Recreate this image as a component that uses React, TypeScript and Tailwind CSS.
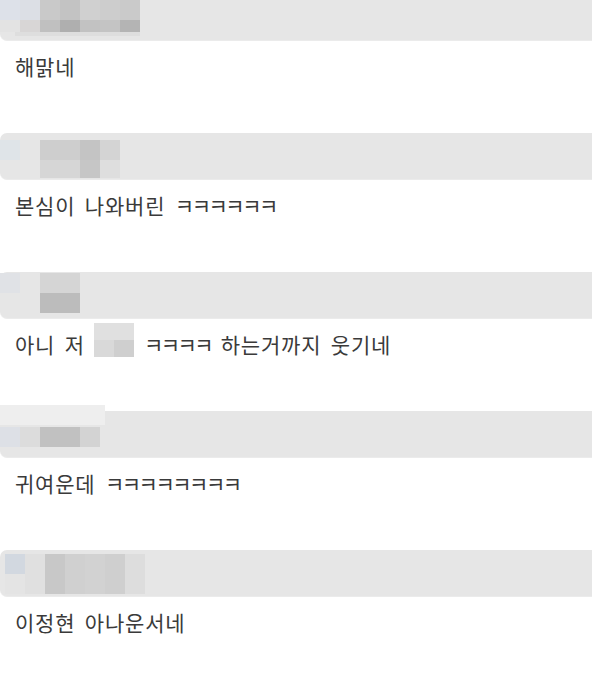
import React from "react";

type Block = { cls: string };

type Comment = {
  id: number;
  blocks: Block[];
  text: React.ReactNode;
};

const Laugh = ({ n }: { n: number }) => <span className="tracking-[-2.5px]">{"ㅋ".repeat(n)}</span>;

// blurred name tile inside the text (third comment)
const InlineBlur = () => (
  <span className="inline-block w-[40px] h-[34px] align-[-4px] -mt-[14px]">
    <span className="flex h-[17px]">
      <span className="block w-[20px] bg-[#e0e0e0]" />
      <span className="block w-[20px] bg-[#e0e0e0]" />
    </span>
    <span className="flex h-[17px]">
      <span className="block w-[20px] bg-[#d9d9d9]" />
      <span className="block w-[20px] bg-[#cfcfcf]" />
    </span>
  </span>
);

const comments: Comment[] = [
  {
    id: 1,
    blocks: [
      { cls: "left-[0px] top-[6px] w-[20px] h-[20px] bg-[#dde1e9]" },
      { cls: "left-[20px] top-[6px] w-[20px] h-[20px] bg-[#dcdfe5]" },
      { cls: "left-[40px] top-[6px] w-[20px] h-[20px] bg-[#c9c9c9]" },
      { cls: "left-[60px] top-[6px] w-[20px] h-[20px] bg-[#c3c3c3]" },
      { cls: "left-[80px] top-[6px] w-[20px] h-[20px] bg-[#d0d0d0]" },
      { cls: "left-[100px] top-[6px] w-[20px] h-[20px] bg-[#cdcdcd]" },
      { cls: "left-[120px] top-[6px] w-[20px] h-[20px] bg-[#cacaca]" },
      { cls: "left-[0px] top-[26px] w-[20px] h-[12px] bg-[#e3e3e3]" },
      { cls: "left-[20px] top-[26px] w-[20px] h-[12px] bg-[#d8d6d6]" },
      { cls: "left-[40px] top-[26px] w-[20px] h-[12px] bg-[#c0c0c0]" },
      { cls: "left-[60px] top-[26px] w-[20px] h-[12px] bg-[#afafaf]" },
      { cls: "left-[80px] top-[26px] w-[20px] h-[12px] bg-[#c2c2c2]" },
      { cls: "left-[100px] top-[26px] w-[20px] h-[12px] bg-[#c4c4c4]" },
      { cls: "left-[120px] top-[26px] w-[20px] h-[12px] bg-[#b4b4b4]" },
      { cls: "left-[15px] top-[38px] w-[125px] h-[4px] bg-[#dedede]" },
    ],
    text: "해맑네",
  },
  {
    id: 2,
    blocks: [
      { cls: "left-[0px] top-[7px] w-[20px] h-[20px] bg-[#dfe4e8]" },
      { cls: "left-[40px] top-[7px] w-[40px] h-[20px] bg-[#cecece]" },
      { cls: "left-[80px] top-[7px] w-[20px] h-[20px] bg-[#c4c4c4]" },
      { cls: "left-[100px] top-[7px] w-[20px] h-[20px] bg-[#d4d4d4]" },
      { cls: "left-[40px] top-[27px] w-[40px] h-[18px] bg-[#d6d6d6]" },
      { cls: "left-[80px] top-[27px] w-[20px] h-[18px] bg-[#c6c6c6]" },
      { cls: "left-[100px] top-[27px] w-[20px] h-[18px] bg-[#dedede]" },
    ],
    text: (
      <>
        본심이 나와버린 <Laugh n={6} />
      </>
    ),
  },
  {
    id: 3,
    blocks: [
      { cls: "left-[0px] top-[1px] w-[20px] h-[20px] bg-[#e0e2e6]" },
      { cls: "left-[40px] top-[1px] w-[40px] h-[20px] bg-[#d5d5d5]" },
      { cls: "left-[40px] top-[21px] w-[40px] h-[20px] bg-[#bcbcbc]" },
    ],
    text: (
      <>
        아니 저 <InlineBlur /> <Laugh n={4} /> 하는거까지 웃기네
      </>
    ),
  },
  {
    id: 4,
    blocks: [
      { cls: "left-[0px] top-[-6px] w-[105px] h-[20px] bg-[#eeeeee]" },
      { cls: "left-[0px] top-[16px] w-[20px] h-[20px] bg-[#dde0e6]" },
      { cls: "left-[20px] top-[16px] w-[20px] h-[20px] bg-[#dcdcdc]" },
      { cls: "left-[40px] top-[16px] w-[40px] h-[20px] bg-[#c1c1c1]" },
      { cls: "left-[80px] top-[16px] w-[20px] h-[20px] bg-[#d3d3d3]" },
    ],
    text: (
      <>
        귀여운데 <Laugh n={8} />
      </>
    ),
  },
  {
    id: 5,
    blocks: [
      { cls: "left-[5px] top-[4px] w-[20px] h-[20px] bg-[#d2d8e0]" },
      { cls: "left-[5px] top-[24px] w-[20px] h-[20px] bg-[#e4e4e4]" },
      { cls: "left-[25px] top-[4px] w-[20px] h-[40px] bg-[#e0e0e0]" },
      { cls: "left-[45px] top-[4px] w-[20px] h-[40px] bg-[#c8c8c8]" },
      { cls: "left-[65px] top-[4px] w-[20px] h-[40px] bg-[#d0d0d0]" },
      { cls: "left-[85px] top-[4px] w-[20px] h-[40px] bg-[#d2d2d2]" },
      { cls: "left-[105px] top-[4px] w-[20px] h-[40px] bg-[#cfcfcf]" },
      { cls: "left-[125px] top-[4px] w-[20px] h-[40px] bg-[#dddddd]" },
    ],
    text: "이정현 아나운서네",
  },
];

export default function App() {
  return (
    <div className="w-[592px] h-[677px] overflow-hidden bg-white font-['Malgun_Gothic','Noto_Sans_CJK_KR',sans-serif]">
      <div className="-mt-[6px] flex flex-col">
        {comments.map((c) => (
          <div key={c.id} className="h-[139px] flex flex-col">
            <div className="relative h-[47px] rounded-l-[7px] bg-[#e6e6e6] border-b border-[#ebebeb]">
              {c.blocks.map((b, i) => (
                <div key={i} className={`absolute ${b.cls}`} />
              ))}
            </div>
            <p className="pl-[15px] pt-[15px] h-[35px] text-[21px] leading-[20px] tracking-[0.8px] [word-spacing:4px] text-[#3a3a3a]">
              {c.text}
            </p>
          </div>
        ))}
      </div>
    </div>
  );
}
